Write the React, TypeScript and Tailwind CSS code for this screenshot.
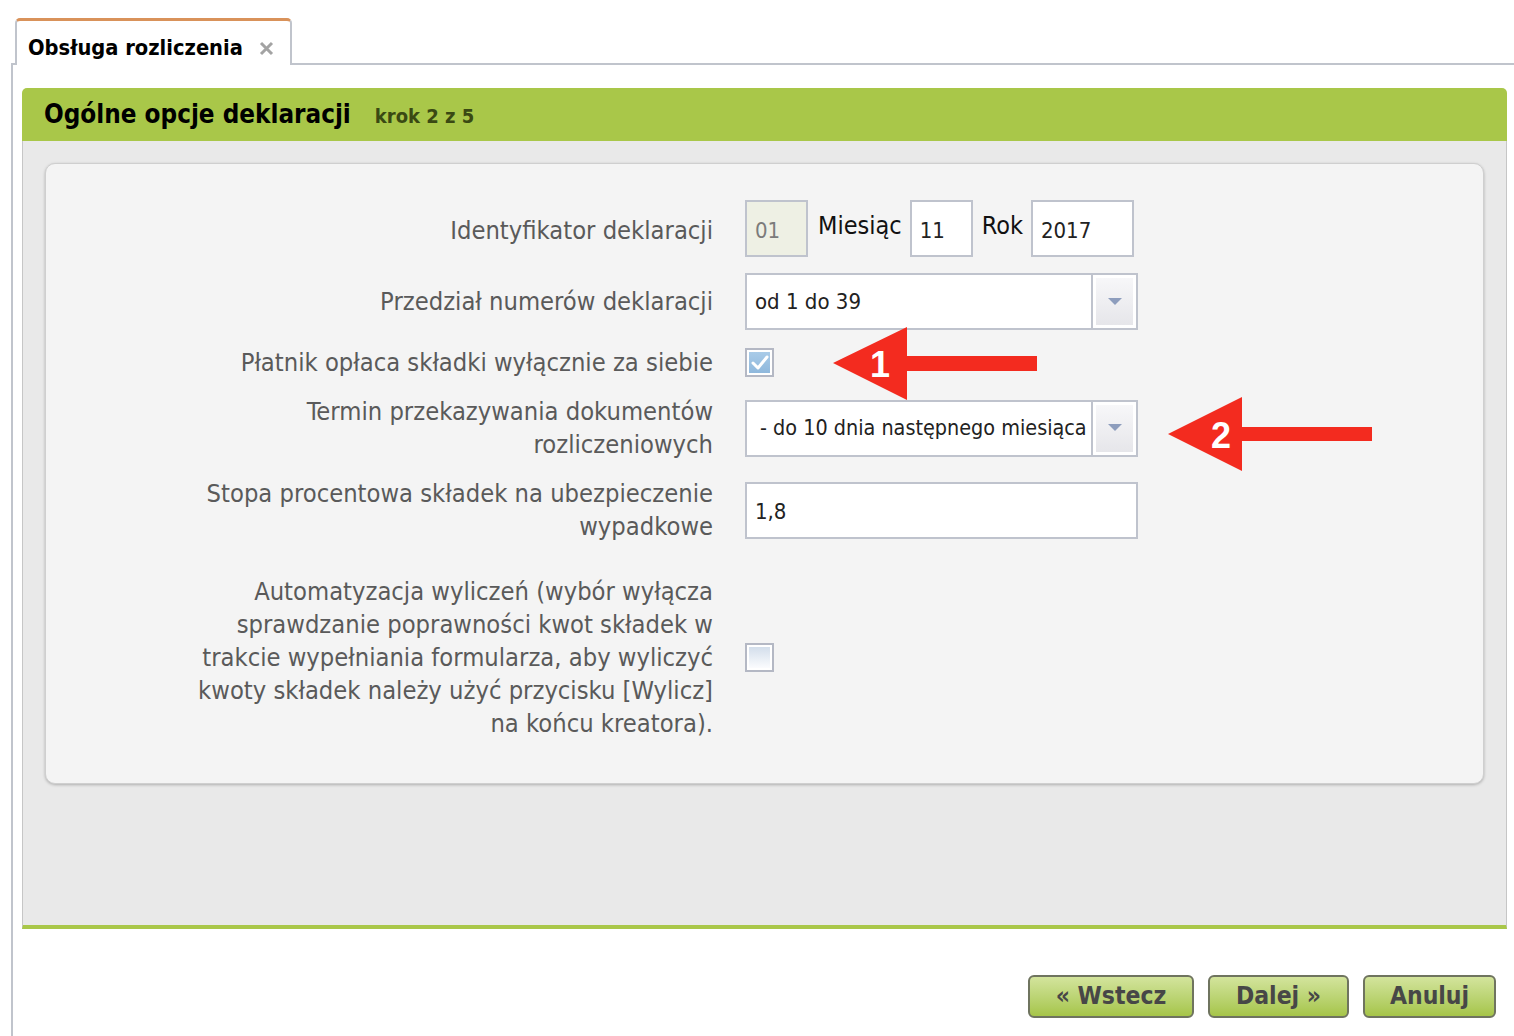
import React from "react";

const Field = ({ children, className = "", color = "text-[#222]" }: { children: React.ReactNode; className?: string; color?: string }) => (
  <div className={`h-[57px] border-2 border-[#bfc3cd] flex items-center pl-[8px] pt-[3px] text-[22px] ${color} ${className}`}>
    {children}
  </div>
);

const Select = ({ value, pad = "pl-[8px]", size = "text-[22px]" }: { value: string; pad?: string; size?: string }) => (
  <div className="h-[57px] w-[393px] border-2 border-[#bfc3cd] bg-white flex">
    <div className={`flex-1 flex items-center ${pad} ${size} text-[#222] whitespace-nowrap overflow-hidden`}>{value}</div>
    <div className="w-[45px] border-l-2 border-[#bfc3cd] p-[3px]">
      <div className="h-full w-full bg-gradient-to-b from-[#f7f7f9] to-[#e6e6ea] flex items-center justify-center">
        <svg width="14" height="8" viewBox="0 0 14 8">
          <polygon points="0,0 14,0 7,7" fill="#8d9dbd" />
        </svg>
      </div>
    </div>
  </div>
);

const Checkbox = ({ checked }: { checked?: boolean }) => (
  <div className="w-[29px] h-[29px] border-2 border-[#b4b8c4] p-[2px] bg-white">
    {checked ? (
      <div className="w-full h-full bg-gradient-to-b from-[#a9cbe8] to-[#8fb8dc] flex items-center justify-center">
        <svg width="18" height="16" viewBox="0 0 18 16">
          <path d="M2 8 L7 13 L16 2" stroke="white" strokeWidth="3" fill="none" strokeLinecap="round" strokeLinejoin="round" />
        </svg>
      </div>
    ) : (
      <div className="w-full h-full bg-gradient-to-b from-[#d3deeb] to-[#fbfcfe]" />
    )}
  </div>
);

const Label = ({ children }: { children: React.ReactNode }) => (
  <div className="w-[667px] shrink-0 text-right text-[25.3px] leading-[33px] text-[#5a5a5a]">{children}</div>
);

const Btn = ({ children, w }: { children: React.ReactNode; w: string }) => (
  <div
    className={`${w} h-[43px] rounded-[6px] border-2 border-[#6f745f] bg-gradient-to-b from-[#d3e49c] to-[#a6c548] flex items-center justify-center font-bold text-[24.5px] text-[#474747]`}
  >
    {children}
  </div>
);

export default function App() {
  return (
    <div className="relative w-[1514px] h-[1036px] bg-white overflow-hidden font-['DejaVu_Sans_Condensed','DejaVu_Sans',sans-serif]">
      <div className="pl-[11px]">
        {/* tab row */}
        <div className="flex items-end h-[65px]">
          <div className="w-[4px] border-b-2 border-[#c0c4cc]" />
          <div className="w-[277px] h-[47px] rounded-t-[5px] border-t-[3px] border-t-[#d9925a] border-x-2 border-x-[#c0c4cc] bg-white flex items-center pl-[11px] pt-[10px] gap-[16px]">
            <span className="font-bold text-[21.7px] text-black leading-none">Obsługa rozliczenia</span>
            <svg width="15" height="15" viewBox="0 0 15 15">
              <path d="M2 2 L13 13 M13 2 L2 13" stroke="#a3a3a3" strokeWidth="3" />
            </svg>
          </div>
          <div className="flex-1 border-b-2 border-[#c0c4cc]" />
        </div>
        {/* main area */}
        <div className="h-[971px] border-l-2 border-[#c0c4cc] pl-[9px] pr-[7px] pt-[23px]">
          <div className="rounded-t-[5px] h-[53px] bg-[#a9c749] flex items-center pl-[22px] gap-[24px]">
            <span className="font-bold text-[25.8px] text-black">Ogólne opcje deklaracji</span>
            <span className="font-bold text-[20px] text-[#3a4913] mt-[3px]">krok 2 z 5</span>
          </div>
          <div className="h-[788px] bg-[#e9e9e9] border-x border-x-[#c6c6c6] border-b-4 border-b-[#a9c749] px-[22px] pt-[22px]">
            <div className="h-[621px] rounded-[10px] bg-[#f4f4f4] border border-[#cfcfcf] shadow-[0_1px_3px_rgba(0,0,0,0.25)] pt-[36px]">
              <div className="flex flex-col gap-[16px]">
                <div className="flex items-center gap-[32px]">
                  <div className="pt-[4px]">
                    <Label>Identyfikator deklaracji</Label>
                  </div>
                  <div className="flex items-center">
                    <Field className="w-[63px] bg-[#eef0e4]" color="text-[#7b7b7b]">01</Field>
                    <span className="ml-[10px] mr-[8px] text-[25px] text-[#111] -mt-[6px]">Miesiąc</span>
                    <Field className="w-[63px] bg-white">11</Field>
                    <span className="ml-[9px] mr-[8px] text-[25px] text-[#111] -mt-[6px]">Rok</span>
                    <Field className="w-[103px] bg-white">2017</Field>
                  </div>
                </div>
                <div className="flex items-center gap-[32px]">
                  <Label>Przedział numerów deklaracji</Label>
                  <Select value="od 1 do 39" />
                </div>
                <div className="flex items-center gap-[32px]">
                  <Label>Płatnik opłaca składki wyłącznie za siebie</Label>
                  <Checkbox checked />
                </div>
                <div className="flex items-center gap-[32px]">
                  <Label>
                    Termin przekazywania dokumentów
                    <br />
                    rozliczeniowych
                  </Label>
                  <Select value="- do 10 dnia następnego miesiąca" pad="pl-[13px]" size="text-[21.4px]" />
                </div>
                <div className="flex items-center gap-[32px]">
                  <Label>
                    Stopa procentowa składek na ubezpieczenie
                    <br />
                    wypadkowe
                  </Label>
                  <Field className="w-[393px] bg-white">1,8</Field>
                </div>
                <div className="flex items-center gap-[32px] mt-[16px]">
                  <Label>
                    Automatyzacja wyliczeń (wybór wyłącza
                    <br />
                    sprawdzanie poprawności kwot składek w
                    <br />
                    trakcie wypełniania formularza, aby wyliczyć
                    <br />
                    kwoty składek należy użyć przycisku [Wylicz]
                    <br />
                    na końcu kreatora).
                  </Label>
                  <Checkbox />
                </div>
              </div>
            </div>
          </div>
          <div className="flex justify-end gap-[14px] pr-[11px] mt-[46px]">
            <Btn w="w-[166px]">« Wstecz</Btn>
            <Btn w="w-[141px]">Dalej »</Btn>
            <Btn w="w-[133px]">Anuluj</Btn>
          </div>
        </div>
      </div>
      {/* annotation arrows */}
      <svg className="absolute left-0 top-0 pointer-events-none" width="1514" height="1036" viewBox="0 0 1514 1036">
        <polygon points="833,363 907,327 907,356 1037,356 1037,371 907,371 907,400" fill="#f32b1f" />
        <text x="880" y="377" textAnchor="middle" fill="white" fontSize="36" fontWeight="bold" fontFamily="Liberation Sans, sans-serif">1</text>
        <polygon points="1168,434 1242,397 1242,427 1372,427 1372,441 1242,441 1242,471" fill="#f32b1f" />
        <text x="1221" y="448" textAnchor="middle" fill="white" fontSize="36" fontWeight="bold" fontFamily="Liberation Sans, sans-serif">2</text>
      </svg>
    </div>
  );
}
